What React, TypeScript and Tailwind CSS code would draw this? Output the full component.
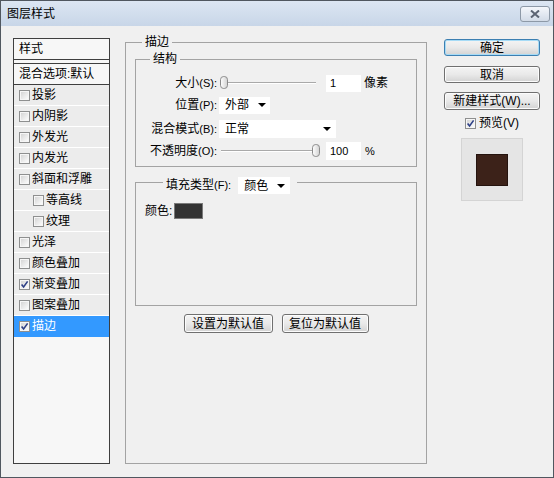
import { FunctionComponent, ReactNode } from "react";
import clsx from "clsx";

const FONT = "font-['Liberation_Sans','Noto_Sans_CJK_SC',sans-serif]";

const styleItems = [
  { label: "投影", checked: false },
  { label: "内阴影", checked: false },
  { label: "外发光", checked: false },
  { label: "内发光", checked: false },
  { label: "斜面和浮雕", checked: false },
  { label: "等高线", checked: false, sub: true },
  { label: "纹理", checked: false, sub: true },
  { label: "光泽", checked: false },
  { label: "颜色叠加", checked: false },
  { label: "渐变叠加", checked: true },
  { label: "图案叠加", checked: false },
  { label: "描边", checked: true, selected: true },
];

const CheckBox: FunctionComponent<{ checked?: boolean }> = ({ checked }) => (
  <svg width="11" height="11" viewBox="0 0 11 11" className="shrink-0">
    <defs>
      <linearGradient id="cbfill" x1="0" y1="0" x2="1" y2="1">
        <stop offset="0" stopColor="#d6d6d6" />
        <stop offset="1" stopColor="#fbfbfb" />
      </linearGradient>
    </defs>
    <rect x="0.5" y="0.5" width="10" height="10" fill="#f6f6f6" stroke="#8e8f8f" />
    <rect x="2" y="2" width="7" height="7" fill="url(#cbfill)" />
    {checked && <path d="M2.6 5.4 L4.6 7.9 L8.6 2.4" fill="none" stroke="#2d3f86" strokeWidth="1.6" />}
  </svg>
);

const Arrow = () => (
  <svg width="8" height="4" viewBox="0 0 8 4" className="shrink-0">
    <path d="M0 0 H8 L4 4 Z" fill="#000" />
  </svg>
);

const Thumb: FunctionComponent<{ className: string }> = ({ className }) => (
  <svg width="8" height="13" viewBox="0 0 8 13" className={className}>
    <defs>
      <linearGradient id="thumbfill" x1="0" y1="0" x2="1" y2="0">
        <stop offset="0" stopColor="#ffffff" />
        <stop offset="1" stopColor="#d2d2d2" />
      </linearGradient>
    </defs>
    <rect x="0.5" y="0.5" width="7" height="12" rx="3.2" fill="url(#thumbfill)" stroke="#8b8b8b" />
  </svg>
);

const Slider: FunctionComponent<{ atEnd?: boolean }> = ({ atEnd }) => (
  <div className="relative h-[14px] w-[98px] shrink-0">
    <div className="absolute left-[2px] right-[1px] top-[6px] h-[2px] border-t border-b border-t-[#a9a9a9] border-b-white" />
    <Thumb className={atEnd ? "absolute right-[-3px] top-0" : "absolute left-[1px] top-0"} />
  </div>
);

const Btn: FunctionComponent<{ children: ReactNode; className?: string; focus?: boolean }> = ({
  children,
  className,
  focus,
}) => (
  <button
    type="button"
    className={clsx(
      "flex items-center justify-center rounded-[3px] border bg-linear-to-b from-[#f4f4f4] via-[#e9e9e9] to-[#d3d3d3] text-[12px] leading-none text-black",
      focus ? "border-[#3c7fb1] shadow-[inset_0_0_0_1px_#a6dbf6]" : "border-[#707070] shadow-[inset_0_0_0_1px_#fcfcfc]",
      className
    )}
  >
    {children}
  </button>
);

// label with its shortcut key in the smaller latin face
const Label: FunctionComponent<{ text: string; hotkey: string }> = ({ text, hotkey }) => (
  <span className="w-[81px] text-right">
    {text}
    <span className="text-[11px]">({hotkey}):</span>
  </span>
);

const App: FunctionComponent = () => {
  return (
    <div
      className={`${FONT} flex h-[478px] w-[554px] flex-col border border-[#50575f] bg-[#f0f0f0] text-[12px] leading-[14px] text-black`}
    >
      {/* title bar */}
      <div className="flex h-[25px] shrink-0 items-center justify-between bg-linear-to-b from-[#dce6f2] to-[#c8d6e8] pl-[6px] pr-[3px]">
        <span>图层样式</span>
        <div className="flex h-[16px] w-[30px] items-center justify-center rounded-[3px] border border-[#8d99a7] bg-linear-to-b from-[#f4f7fb] to-[#d2dbe7]">
          <svg width="10" height="8" viewBox="0 0 10 8">
            <path d="M1 0.5 L9 7.5 M9 0.5 L1 7.5" stroke="#5c6573" strokeWidth="2" />
          </svg>
        </div>
      </div>

      <div className="flex flex-1 items-start pl-[12px] pt-[12px]">
        {/* style list */}
        <div className="flex h-[426px] w-[97px] shrink-0 flex-col border border-[#3f3f3f] bg-[#f7f7f7]">
          <div className="flex h-[21px] shrink-0 items-center border-b border-[#3f3f3f] pl-[5px]">样式</div>
          <div className="mt-[3px] flex h-[22px] shrink-0 items-center border-y border-[#3f3f3f] pl-[5px]">
            混合选项:默认
          </div>
          {styleItems.map((item) => (
            <div
              key={item.label}
              className={clsx(
                "flex h-[21px] shrink-0 items-center gap-[2px] border-b",
                item.sub ? "pl-[19px]" : "pl-[5px]",
                item.selected ? "border-[#3399ff] bg-[#3399ff] text-white" : "border-white bg-[#ececec]"
              )}
            >
              <CheckBox checked={item.checked} />
              <span>{item.label}</span>
            </div>
          ))}
        </div>

        {/* stroke group */}
        <fieldset className="ml-[15px] mt-[-3px] h-[429px] w-[302px] shrink-0 border border-[#a3a3a3] px-[9px]">
          <legend className="ml-[7px] px-[3px]">描边</legend>

          <fieldset className="mt-[3px] border border-[#a3a3a3] pb-[4px] pt-[6px]">
            <legend className="ml-[14px] px-[3px]">结构</legend>

            <div className="flex h-[22px] items-center">
              <Label text="大小" hotkey="S" />
              <div className="ml-[2px]">
                <Slider />
              </div>
              <div className="ml-[9px] flex h-[17px] w-[35px] items-center bg-white pl-[4px] text-[11px]">1</div>
              <span className="ml-[3px]">像素</span>
            </div>

            <div className="flex h-[22px] items-center">
              <Label text="位置" hotkey="P" />
              <div className="ml-[2px] flex h-[17px] w-[51px] items-center justify-between bg-white pl-[6px] pr-[4px]">
                <span>外部</span>
                <Arrow />
              </div>
            </div>

            <div className="mt-[2px] flex h-[22px] items-center">
              <Label text="混合模式" hotkey="B" />
              <div className="ml-[2px] flex h-[18px] w-[117px] items-center justify-between bg-white pl-[6px] pr-[5px]">
                <span>正常</span>
                <Arrow />
              </div>
            </div>

            <div className="flex h-[22px] items-center">
              <Label text="不透明度" hotkey="O" />
              <div className="ml-[2px]">
                <Slider atEnd />
              </div>
              <div className="ml-[9px] flex h-[18px] w-[35px] items-center bg-white pl-[4px] text-[11px]">100</div>
              <span className="ml-[4px] text-[11px]">%</span>
            </div>
          </fieldset>

          <fieldset className="mt-[10px] h-[129px] border border-[#a3a3a3] pl-[9px] pt-[16px]">
            <legend className="ml-[18px] flex h-[10px] items-start pl-[3px] pr-[7px]">
              <span className="mt-[1px]">
                填充类型<span className="text-[11px]">(F):</span>
              </span>
              <div className="ml-[7px] flex h-[17px] w-[52px] shrink-0 items-center justify-between bg-white pl-[6px] pr-[5px]">
                <span>颜色</span>
                <Arrow />
              </div>
            </legend>
            <div className="flex items-center">
              <span>颜色:</span>
              <div className="ml-[2px] h-[16px] w-[29px] border border-[#7a7a7a] bg-[#333333]" />
            </div>
          </fieldset>

          <div className="mt-[8px] flex justify-center gap-[9px]">
            <Btn className="h-[19px] w-[89px]">设置为默认值</Btn>
            <Btn className="h-[19px] w-[87px]">复位为默认值</Btn>
          </div>
        </fieldset>

        {/* right column */}
        <div className="ml-[17px] mt-[1px] flex w-[96px] shrink-0 flex-col items-center">
          <Btn focus className="h-[17px] w-[96px]">
            确定
          </Btn>
          <Btn className="mt-[10px] h-[17px] w-[96px]">取消</Btn>
          <Btn className="mt-[9px] h-[18px] w-[96px]">新建样式(W)...</Btn>
          <div className="mt-[5px] flex h-[16px] items-center gap-[3px]">
            <CheckBox checked />
            <span>预览(V)</span>
          </div>
          <div className="mt-[7px] flex h-[63px] w-[62px] items-center justify-center border border-[#d4d4d4] bg-[#e5e5e5]">
            <div className="h-[32px] w-[32px] border border-[#24130e] bg-[#3c2219]" />
          </div>
        </div>
      </div>
    </div>
  );
};

export default App;
